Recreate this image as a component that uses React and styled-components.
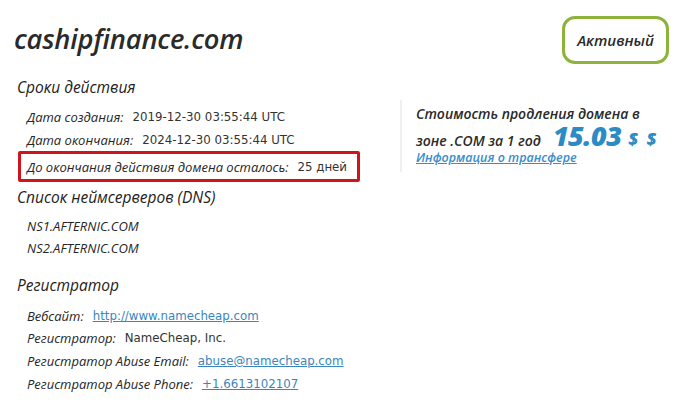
import React from "react";
import styled, { createGlobalStyle } from "styled-components";

const Global = createGlobalStyle`
  html, body { margin: 0; padding: 0; background: #fff; }
  body { width: 686px; height: 410px; overflow: hidden; }
`;

const Page = styled.div`
  padding: 12px 17px 0 14px;
  font-family: "Open Sans", "Noto Sans", sans-serif;
  color: #2b2b2b;
`;

const Header = styled.header`
  display: flex;
  justify-content: space-between;
  align-items: center;
  height: 52px;
`;

const Title = styled.h1`
  margin: 0;
  font-size: 27.3px;
  font-weight: 600;
  font-style: italic;
  color: #2a2a2a;
  letter-spacing: -0.2px;
`;

const Badge = styled.div`
  box-sizing: border-box;
  width: 107px;
  height: 48px;
  border: 3px solid #8db33a;
  border-radius: 13px;
  display: flex;
  align-items: center;
  justify-content: center;
  font-style: italic;
  font-weight: 600;
  font-size: 15px;
  color: #2a2a2a;
  margin-top: 4px;
`;

const Body = styled.div`
  display: grid;
  grid-template-columns: 386px 1fr;
`;

const Left = styled.div`
  display: flex;
  flex-direction: column;
  align-items: flex-start;
  padding-left: 3px;
`;

const SectionTitle = styled.h2`
  margin: ${(p) => p.$top || 0}px 0 0 0;
  font-size: 15.5px;
  font-weight: 500;
  font-style: italic;
  color: #222;
  line-height: 22px;
`;

const Rows = styled.div`
  display: flex;
  flex-direction: column;
  align-items: flex-start;
  padding: ${(p) => p.$pad || "8px 0 0 10px"};
`;

const Row = styled.div`
  display: flex;
  align-items: center;
  height: 22.7px;
  font-size: 13px;
  ${(p) =>
    p.$boxed &&
    `
    border: 3px solid #d0141b;
    border-radius: 2px;
    margin: 0 0 0 -9px;
    padding: 0 10px 0 6px;
    height: 25px;
  `}
`;

const Label = styled.span`
  font-style: italic;
  font-weight: 500;
  color: #262626;
  margin-right: 9px;
`;

const Value = styled.span`
  font-family: "DejaVu Sans", sans-serif;
  font-size: 11.8px;
  color: #333;
`;

const Link = styled.a`
  font-family: "DejaVu Sans", sans-serif;
  font-size: 11.8px;
  color: #3b85bd;
  text-decoration: underline;
`;

const NS = styled.div`
  font-style: italic;
  font-weight: 500;
  font-size: 13px;
  color: #262626;
  height: 22px;
  display: flex;
  align-items: center;
`;

const Price = styled.aside`
  margin-top: 36px;
  border-left: 2px solid #f0f0f0;
  padding: 2px 0 6px 14px;
  align-self: start;
  font-style: italic;
  font-weight: 600;
  font-size: 14px;
  color: #2a2a2a;
  line-height: 24px;
`;

const Line = styled.div`
  display: flex;
  align-items: baseline;
  height: 24px;
`;

const Amount = styled.span`
  font-size: 27px;
  line-height: 20px;
  font-weight: 800;
  color: #2b8bc4;
  margin-left: 12px;
  letter-spacing: -0.5px;
`;

const Currency = styled.span`
  font-size: 17px;
  line-height: 20px;
  font-weight: 800;
  color: #2b8bc4;
  margin-left: 7px;
  letter-spacing: 2px;
`;

const TransferLink = styled.a`
  font-size: 12.5px;
  font-weight: 600;
  color: #3b8ccb;
  text-decoration: underline;
  display: block;
  line-height: 16px;
`;

export default function App() {
  return (
    <>
      <Global />
      <Page>
        <Header>
          <Title>cashipfinance.com</Title>
          <Badge>Активный</Badge>
        </Header>
        <Body>
          <Left>
            <SectionTitle $top={12}>Сроки действия</SectionTitle>
            <Rows>
              <Row>
                <Label>Дата создания:</Label>
                <Value>2019-12-30 03:55:44 UTC</Value>
              </Row>
              <Row>
                <Label>Дата окончания:</Label>
                <Value>2024-12-30 03:55:44 UTC</Value>
              </Row>
              <Row $boxed>
                <Label>До окончания действия домена осталось:</Label>
                <Value>25 дней</Value>
              </Row>
            </Rows>
            <SectionTitle $top={4}>Список неймсерверов (DNS)</SectionTitle>
            <Rows $pad="7px 0 0 10px">
              <NS>NS1.AFTERNIC.COM</NS>
              <NS>NS2.AFTERNIC.COM</NS>
            </Rows>
            <SectionTitle $top={15}>Регистратор</SectionTitle>
            <Rows $pad="8px 0 0 10px">
              <Row>
                <Label>Вебсайт:</Label>
                <Link href="#">http://www.namecheap.com</Link>
              </Row>
              <Row>
                <Label>Регистратор:</Label>
                <Value>NameCheap, Inc.</Value>
              </Row>
              <Row>
                <Label>Регистратор Abuse Email:</Label>
                <Link href="#">abuse@namecheap.com</Link>
              </Row>
              <Row>
                <Label>Регистратор Abuse Phone:</Label>
                <Link href="#">+1.6613102107</Link>
              </Row>
            </Rows>
          </Left>
          <Price>
            <div>Стоимость продления домена в</div>
            <Line>
              зоне .COM за 1 год
              <Amount>15.03</Amount>
              <Currency>$ $</Currency>
            </Line>
            <TransferLink href="#">Информация о трансфере</TransferLink>
          </Price>
        </Body>
      </Page>
    </>
  );
}
